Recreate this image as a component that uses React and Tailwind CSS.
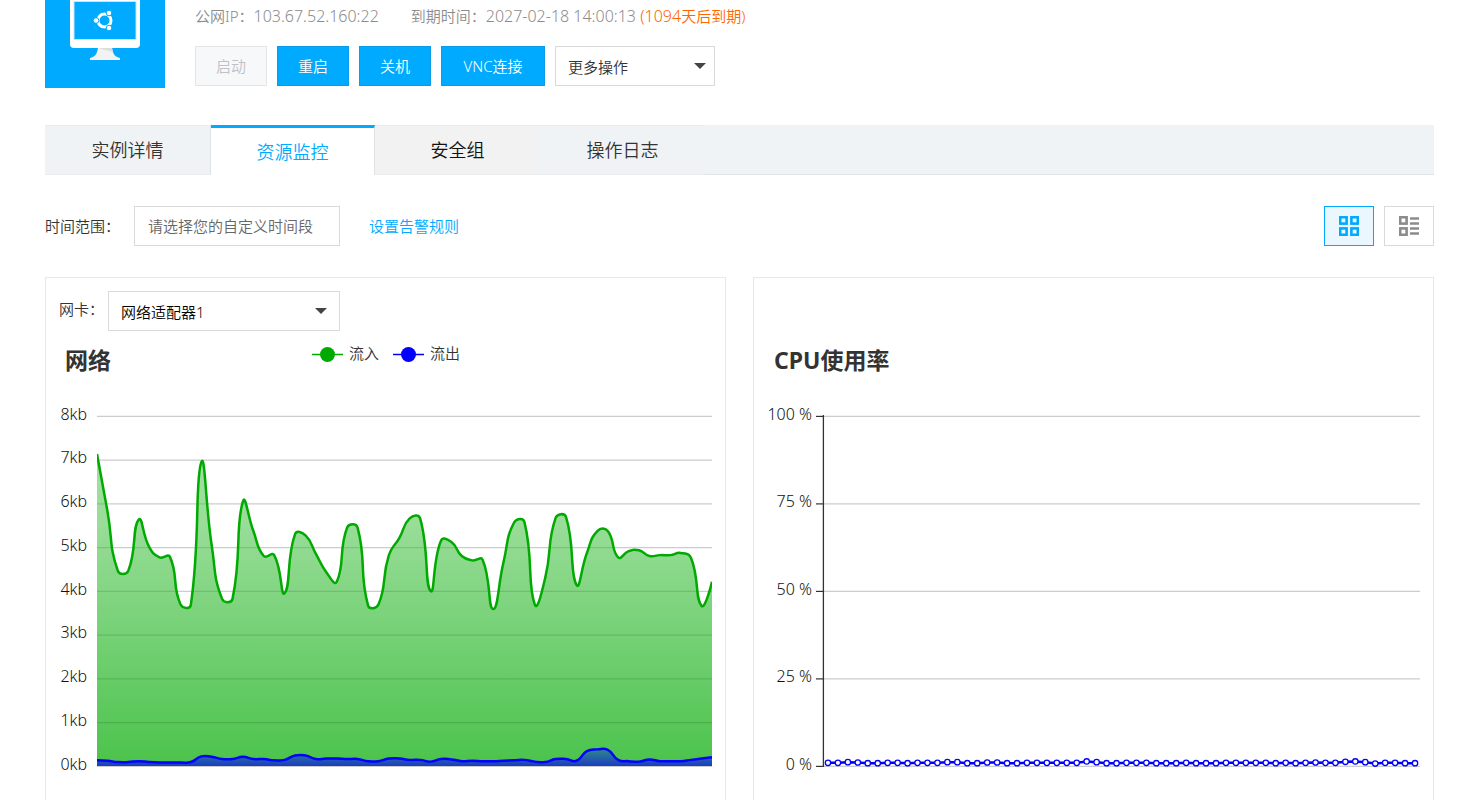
import React from 'react';

const CHART_WIDTH = 679;
const CHART_HEIGHT = 500;
const PLOT_TOP = 85;
const PLOT_BOTTOM = 435;

const inbound = [
  7.13, 5.83, 4.46, 4.46, 5.63, 5.01, 4.77, 4.78, 3.7, 3.68, 6.94, 5.05, 3.82, 3.82, 6.05,
  5.37, 4.8, 4.82, 3.95, 5.3, 5.27, 4.85, 4.43, 4.21, 5.45, 5.45, 3.67, 3.69, 4.82, 5.21,
  5.66, 5.66, 4.0, 5.15, 5.12, 4.8, 4.7, 4.71, 3.59, 4.66, 5.56, 5.58, 3.69, 4.3, 5.67,
  5.69, 4.14, 4.87, 5.37, 5.37, 4.77, 4.91, 4.93, 4.8, 4.82, 4.82, 4.87, 4.75, 3.66, 4.21,
];

const outbound = [
  0.13, 0.12, 0.09, 0.09, 0.11, 0.09, 0.08, 0.08, 0.08, 0.09, 0.22, 0.21, 0.16, 0.16, 0.21,
  0.16, 0.16, 0.13, 0.14, 0.24, 0.24, 0.16, 0.17, 0.17, 0.16, 0.16, 0.11, 0.11, 0.17, 0.17,
  0.14, 0.14, 0.1, 0.16, 0.15, 0.11, 0.12, 0.11, 0.11, 0.12, 0.13, 0.14, 0.1, 0.09, 0.16,
  0.16, 0.12, 0.34, 0.38, 0.37, 0.14, 0.11, 0.1, 0.15, 0.11, 0.11, 0.11, 0.14, 0.17, 0.2,
];

const cpuUsage = [
  0.9, 0.9, 1.1, 1.0, 0.8, 0.8, 0.9, 0.9, 0.8, 0.9, 0.9, 0.9, 1.1, 1.1, 0.8,
  0.8, 1.0, 1.0, 0.8, 0.8, 0.9, 0.9, 0.9, 0.9, 0.9, 0.9, 1.3, 1.1, 0.8, 0.8,
  0.9, 0.9, 0.9, 0.8, 0.8, 0.8, 0.9, 0.8, 0.8, 0.8, 0.9, 0.9, 0.9, 0.9, 0.9,
  0.8, 0.9, 0.8, 0.9, 1.0, 0.9, 0.9, 1.2, 1.3, 1.1, 0.7, 0.9, 0.9, 0.8, 0.8,
];

const tabs = [
  { label: '实例详情', className: 'w-[166px] border-y border-r border-y-[#ededed] border-r-[#e0e3e6] bg-[#eff3f6]' },
  { label: '资源监控', className: 'w-[164px] border-t-3 border-r border-t-[#00aaff] border-r-[#e0e3e6] bg-white text-[#00aaff]' },
  { label: '安全组', className: 'w-[165px] border-y border-[#ededed] bg-[#f2f2f2] text-[#111]' },
  { label: '操作日志', className: 'w-[165px] border-y border-[#ededed] bg-[#eff3f6]' },
];

function toPoints(values, left, step, max) {
  return values.map((value, i) => [
    left + i * step,
    PLOT_BOTTOM - (value / max) * (PLOT_BOTTOM - PLOT_TOP),
  ]);
}

// Bezier smoothing, handles are shared out by the length of the two segments
function smoothPath(points) {
  const handles = points.map((p, i) => {
    const prev = points[i - 1];
    const next = points[i + 1];
    if (!prev || !next) return [p, p];
    const vx = (next[0] - prev[0]) / 2;
    const vy = (next[1] - prev[1]) / 2;
    const before = Math.hypot(p[0] - prev[0], p[1] - prev[1]);
    const after = Math.hypot(next[0] - p[0], next[1] - p[1]);
    const ratio = after / (before + after);
    return [
      [p[0] - vx * (1 - ratio), p[1] - vy * (1 - ratio)],
      [p[0] + vx * ratio, p[1] + vy * ratio],
    ];
  });

  let d = `M${points[0].join(' ')}`;
  for (let i = 1; i < points.length; i++) {
    d += ` C${handles[i - 1][1].join(' ')} ${handles[i][0].join(' ')} ${points[i].join(' ')}`;
  }
  return d;
}

function GridLines({ count, left, right }) {
  const gap = (PLOT_BOTTOM - PLOT_TOP) / count;
  return Array.from({ length: count + 1 }, (_, i) => (
    <line
      key={i}
      x1={left}
      x2={right}
      y1={PLOT_BOTTOM - i * gap + 0.4}
      y2={PLOT_BOTTOM - i * gap + 0.4}
      stroke="#ccc"
      strokeWidth="1.2"
    />
  ));
}

function AxisLabels({ labels, x }) {
  const gap = (PLOT_BOTTOM - PLOT_TOP) / (labels.length - 1);
  return labels.map((label, i) => (
    <text key={label} x={x} y={Math.floor(PLOT_BOTTOM - i * gap) + 4} textAnchor="end" fontSize="16" fill="#111">
      {label}
    </text>
  ));
}

function LegendItem({ x, color, label }) {
  return (
    <g>
      <line x1={x} x2={x + 31} y1="23.5" y2="23.5" stroke={color} strokeWidth="1.5" />
      <circle cx={x + 15.5} cy="23.5" r="7.5" fill={color} />
      <text x={x + 37} y="28" fontSize="15" fill="#333">
        {label}
      </text>
    </g>
  );
}

function NetworkChart() {
  const left = 51;
  const right = 666;
  const step = (right - left) / (inbound.length - 1);
  const inPath = smoothPath(toPoints(inbound, left, step, 8));
  const outPath = smoothPath(toPoints(outbound, left, step, 8));
  const close = ` L${right} ${PLOT_BOTTOM} L${left} ${PLOT_BOTTOM} Z`;

  return (
    <svg viewBox={`0 0 ${CHART_WIDTH} ${CHART_HEIGHT}`} className="block w-full" role="img" aria-label="网络">
      <defs>
        <linearGradient id="inFill" gradientUnits="userSpaceOnUse" x1="0" y1={PLOT_TOP} x2="0" y2={PLOT_BOTTOM}>
          <stop offset="0" stopColor="#a8e0a8" />
          <stop offset="0.3" stopColor="#99dd99" />
          <stop offset="1" stopColor="#4bc34b" />
        </linearGradient>
        <linearGradient id="outFill" gradientUnits="userSpaceOnUse" x1="0" y1="417" x2="0" y2={PLOT_BOTTOM}>
          <stop offset="0" stopColor="#2f8f80" />
          <stop offset="1" stopColor="#1b3cc4" />
        </linearGradient>
        <clipPath id="plotArea">
          <rect x={left} y={PLOT_TOP} width={right - left} height={PLOT_BOTTOM - PLOT_TOP} />
        </clipPath>
        <clipPath id="inArea">
          <path d={inPath + close} />
        </clipPath>
      </defs>
      <text x="19" y="38" fontSize="23" fontWeight="700" fill="#333">
        网络
      </text>
      <LegendItem x={266} color="#0a0" label="流入" />
      <LegendItem x={347} color="#00f" label="流出" />
      <AxisLabels labels={['0kb', '1kb', '2kb', '3kb', '4kb', '5kb', '6kb', '7kb', '8kb']} x={41} />
      <GridLines count={8} left={left} right={right} />
      <g clipPath="url(#plotArea)">
        <path d={inPath + close} fill="url(#inFill)" />
        <g clipPath="url(#inArea)" opacity="0.6" className="mix-blend-multiply">
          <GridLines count={8} left={left} right={right} />
        </g>
        <path d={inPath} fill="none" stroke="#0a0" strokeWidth="2.5" />
        <path d={outPath + close} fill="url(#outFill)" />
        <path d={outPath} fill="none" stroke="#00f" strokeWidth="2.5" />
      </g>
    </svg>
  );
}

function CpuChart() {
  const left = 69;
  const right = 666;
  const step = (right - left) / cpuUsage.length;
  const points = toPoints(cpuUsage, left + step / 2, step, 100);

  return (
    <svg viewBox={`0 0 ${CHART_WIDTH} ${CHART_HEIGHT}`} className="block w-full" role="img" aria-label="CPU使用率">
      <text x="20" y="38" fontSize="23" fontWeight="700" fill="#333">
        CPU使用率
      </text>
      <AxisLabels labels={['0 %', '25 %', '50 %', '75 %', '100 %']} x={58} />
      <GridLines count={4} left={left} right={right} />
      <g stroke="#333">
        <line x1="69.4" x2="69.4" y1={PLOT_TOP - 1} y2={PLOT_BOTTOM + 1} strokeWidth="1.3" />
        {[0, 1, 2, 3, 4].map((i) => {
          const y = PLOT_BOTTOM - i * 87.5 + 0.4;
          return <line key={i} x1="62" x2="69" y1={y} y2={y} strokeWidth="1.2" />;
        })}
      </g>
      <polyline points={points.map((p) => p.join(',')).join(' ')} fill="none" stroke="#00f" strokeWidth="2.5" />
      {points.map(([x, y]) => (
        <circle key={x} cx={x} cy={y} r="2.7" fill="#fff" stroke="#00f" strokeWidth="1.3" />
      ))}
    </svg>
  );
}

function MonitorIcon() {
  return (
    <svg viewBox="0 0 120 88" className="block h-[88px] w-[120px]" aria-hidden="true">
      <path d="M25 -4H95V44a4 4 0 0 1-4 4H29a4 4 0 0 1-4-4Z" fill="#fff" />
      <rect x="29" y="1.5" width="62" height="38" fill="#0af" stroke="#bfe9ff" />
      <path d="M53 48H67C68 54 70 57 75 58V60H45V58C50 57 52 54 53 48Z" fill="#f2f2f2" />
      <path d="M53 48H67L68 52Z" fill="#ddd" />
      <circle cx="59.5" cy="20.5" r="6.5" fill="none" stroke="#fff" strokeWidth="3" />
      <g fill="#fff" stroke="#0af" strokeWidth="1">
        <circle cx="51" cy="20.5" r="2.8" />
        <circle cx="64" cy="13" r="2.8" />
        <circle cx="64" cy="28" r="2.8" />
      </g>
    </svg>
  );
}

function Caret() {
  return (
    <svg viewBox="0 0 12 6" className="h-1.5 w-3" aria-hidden="true">
      <path d="M0 0H12L6 6Z" fill="#444" />
    </svg>
  );
}

export default function App() {
  return (
    <div className="h-screen overflow-hidden bg-white pr-11 pl-[45px] font-['Noto_Sans','Noto_Sans_CJK_SC',sans-serif] text-[15px] leading-5 font-[350] text-[#333]">
      {/* Instance summary */}
      <header className="flex gap-[30px]">
        <div className="shrink-0 bg-[#00aaff]">
          <MonitorIcon />
        </div>
        <div className="flex flex-col gap-5 pt-1.5">
          <div className="flex h-5 gap-8 text-[#8c8c8c]">
            <span>
              公网IP：<span className="text-base leading-5">103.67.52.160:22</span>
            </span>
            <span>
              到期时间：<span className="text-base leading-5">2027-02-18 14:00:13 </span>
              <span className="text-[#ff6600]">
                <span className="text-base leading-5">(1094</span>天后到期)
              </span>
            </span>
          </div>
          <div className="flex gap-2.5">
            <button type="button" disabled className="h-10 w-18 border border-[#e3e5e8] bg-[#f7f8fa] text-[#c0c1c4]">
              启动
            </button>
            <button type="button" className="h-10 w-18 border border-[#0a9ce8] bg-[#00aaff] text-white">
              重启
            </button>
            <button type="button" className="h-10 w-18 border border-[#0a9ce8] bg-[#00aaff] text-white">
              关机
            </button>
            <button type="button" className="h-10 w-26 border border-[#0a9ce8] bg-[#00aaff] text-white">
              VNC连接
            </button>
            <div className="relative h-10 w-40 border border-[#d9dadc]">
              <select aria-label="更多操作" className="h-full w-full appearance-none pt-0.5 pl-3 outline-none">
                <option>更多操作</option>
              </select>
              <span className="pointer-events-none absolute top-4 right-2">
                <Caret />
              </span>
            </div>
          </div>
        </div>
      </header>

      {/* Tabs */}
      <nav className="mt-[37px] flex h-[50px] border-b border-[#e0e3e6] bg-[#eff3f6] text-lg">
        {tabs.map((tab) => (
          <button key={tab.label} type="button" className={`h-[50px] ${tab.className}`}>
            {tab.label}
          </button>
        ))}
      </nav>

      {/* Filter bar */}
      <div className="mt-[31px] flex items-center">
        <label htmlFor="range">时间范围：</label>
        <input
          id="range"
          type="text"
          placeholder="请选择您的自定义时间段"
          className="ml-3.5 h-10 w-[206px] border border-[#d9dadc] px-[13px] outline-none placeholder:text-[#666]"
        />
        <a href="#alarm" className="ml-[29px] text-[#00aaff]">
          设置告警规则
        </a>
        <div className="ml-auto flex gap-2.5">
          <button
            type="button"
            aria-label="宫格视图"
            className="flex h-10 w-[50px] items-center justify-center border border-[#00aaff] bg-[#eaf7ff]"
          >
            <svg viewBox="0 0 20 20" className="size-5" fill="#eaf7ff" stroke="#0af" strokeWidth="2.6">
              <rect x="1.2" y="1.2" width="6.4" height="6.4" />
              <rect x="12.4" y="1.2" width="6.4" height="6.4" />
              <rect x="1.2" y="12.4" width="6.4" height="6.4" />
              <rect x="12.4" y="12.4" width="6.4" height="6.4" />
            </svg>
          </button>
          <button
            type="button"
            aria-label="列表视图"
            className="flex h-10 w-[50px] items-center justify-center border border-[#d9dadc] bg-white"
          >
            <svg viewBox="0 0 20 20" className="size-5" fill="none" stroke="#8c8c8c" strokeWidth="2.6">
              <rect x="1.2" y="1.2" width="6.4" height="6.4" />
              <rect x="1.2" y="12.4" width="6.4" height="6.4" />
              <path d="M11 2.5H20M11 7.5H20M11 12.5H20M11 17.5H20" strokeWidth="2.4" />
            </svg>
          </button>
        </div>
      </div>

      {/* Charts */}
      <main className="mt-[31px] grid grid-cols-2 gap-[27px]">
        <section className="border border-[#e8e8e8]">
          <div className="flex gap-1 pt-[13px] pl-[13px]">
            <label htmlFor="nic" className="pt-2">
              网卡：
            </label>
            <div className="relative h-10 w-58 border border-[#d9dadc]">
              <select id="nic" className="h-full w-full appearance-none pt-0.5 pl-3 text-black outline-none">
                <option>网络适配器1</option>
              </select>
              <span className="pointer-events-none absolute top-4 right-3">
                <Caret />
              </span>
            </div>
          </div>
          <NetworkChart />
        </section>
        <section className="border border-[#e8e8e8] pt-[53px]">
          <CpuChart />
        </section>
      </main>
    </div>
  );
}
